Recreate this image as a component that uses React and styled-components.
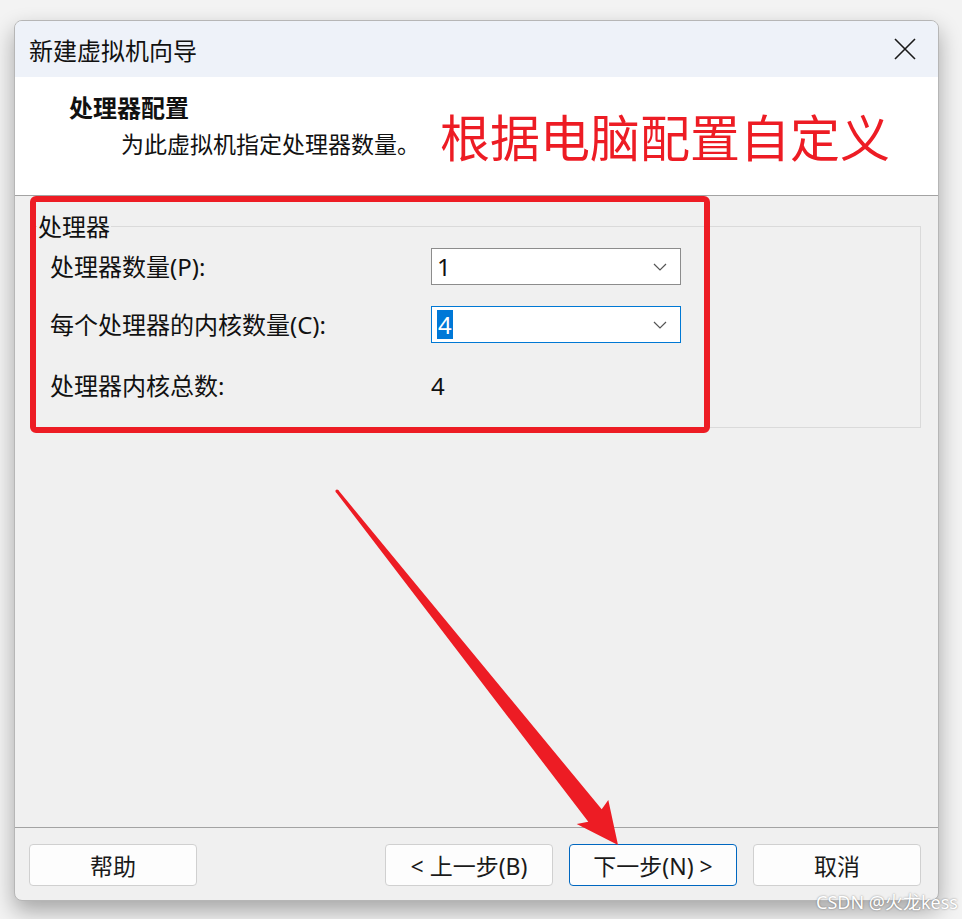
import React from 'react'
import styled, { createGlobalStyle } from 'styled-components'

const GlobalStyle = createGlobalStyle`
    html, body {
        margin: 0;
        background: #f3f3f3;
    }
    body {
        font-family: "Noto Sans", "Noto Sans CJK SC", sans-serif;
        color: #111;
    }
`;

const Page = styled.div`
    position: relative;
    width: 962px;
    height: 919px;
    box-sizing: border-box;
    padding: 20px 0 0 14px;
    overflow: hidden;
`;

const Window = styled.div`
    width: 925px;
    height: 881px;
    box-sizing: border-box;
    border: 1px solid #b6b6b6;
    border-radius: 8px;
    overflow: hidden;
    display: flex;
    flex-direction: column;
    background: #f0f0f0;
    box-shadow: 0 10px 22px rgba(0, 0, 0, 0.32);
`;

const TitleBar = styled.div`
    height: 56px;
    flex-shrink: 0;
    background: #eef2f9;
    display: flex;
    align-items: center;
    justify-content: space-between;
    padding: 0 22px 0 14px;
    font-family: "Noto Sans CJK SC", sans-serif;
    font-size: 24px;
`;

const CloseIcon = styled.svg`
    width: 22px;
    height: 22px;
    display: block;
`;

const Header = styled.div`
    position: relative;
    height: 118px;
    flex-shrink: 0;
    box-sizing: content-box;
    background: #fff;
    border-bottom: 1px solid #a3a3a3;
    padding: 0 0 0 54px;
    font-family: "Noto Sans CJK SC", sans-serif;
`;

const HeaderTitle = styled.div`
    padding-top: 15px;
    font-size: 24px;
    font-weight: 700;
    line-height: 30px;
`;

const HeaderText = styled.div`
    margin: 6px 0 0 52px;
    font-size: 23px;
    line-height: 30px;
`;

// red note written over the screenshot
const Note = styled.div`
    position: absolute;
    left: 425px;
    top: 28px;
    font-size: 50px;
    line-height: 60px;
    color: #ed1c24;
    white-space: nowrap;
`;

const Body = styled.div`
    flex: 1;
    padding: 16px 17px 0 15px;
`;

const GroupBox = styled.fieldset`
    margin: 0;
    padding: 0 0 19px 6px;
    border: 1px solid #dadada;
`;

const GroupLabel = styled.legend`
    padding: 0 1px;
    font-family: "Noto Sans CJK SC", sans-serif;
    font-size: 24px;
    line-height: 28px;
`;

const Form = styled.div`
    margin-top: 8px;
    padding-left: 13px;
    display: grid;
    grid-template-columns: 381px 250px;
    grid-template-rows: 37px 37px 44px;
    row-gap: 21px;
    align-items: center;
    font-size: 24px;
`;

const Label = styled.div`
    font-family: "Noto Sans", "Noto Sans CJK SC", sans-serif;
    line-height: 30px;
`;

const Combo = styled.div`
    height: 37px;
    box-sizing: border-box;
    border: 1px solid ${p => (p.$focused ? '#0078d4' : '#8c8c8c')};
    background: #fff;
    display: flex;
    align-items: center;
    justify-content: space-between;
    padding: 0 13px 0 5px;
    font-size: 24px;
`;

const Selected = styled.span`
    background: #0078d7;
    color: #fff;
    line-height: 29px;
    padding: 0 1px;
`;

const Value = styled.div`
    font-size: 24px;
    line-height: 30px;
`;

const Footer = styled.div`
    height: 73px;
    flex-shrink: 0;
    box-sizing: border-box;
    border-top: 1px solid #a3a3a3;
    padding: 16px 17px 0 14px;
    display: flex;
    justify-content: space-between;
    align-items: flex-start;
`;

const ButtonGroup = styled.div`
    display: flex;
    gap: 16px;
`;

const Button = styled.button`
    width: 168px;
    height: 42px;
    box-sizing: border-box;
    border: 1px solid ${p => (p.$primary ? '#0067c0' : '#d0d0d0')};
    border-radius: 4px;
    background: #fdfdfd;
    color: #1a1a1a;
    font-family: "Noto Sans", "Noto Sans CJK SC", sans-serif;
    font-size: 23px;
    padding: 0;
`;

const Overlay = styled.svg`
    position: absolute;
    left: 0;
    top: 0;
    pointer-events: none;
`;

const Watermark = styled.div`
    position: absolute;
    right: 4px;
    bottom: 5px;
    font-family: "Noto Sans", "Noto Sans CJK SC", sans-serif;
    font-size: 18px;
    color: #fff;
    text-shadow: 0 0 2px rgba(0, 0, 0, 0.45);
`;

const Chevron = () => (
    <svg width="14" height="8" viewBox="0 0 14 8">
        <polyline points="1,1 7,7 13,1" fill="none" stroke="#555" strokeWidth="1.2" />
    </svg>
);

const App = () => {
    return (
        <Page>
            <GlobalStyle />
            <Window>
                <TitleBar>
                    新建虚拟机向导
                    <CloseIcon viewBox="0 0 22 22">
                        <path d="M1 1 L21 21 M21 1 L1 21" stroke="#1a1a1a" strokeWidth="1.6" />
                    </CloseIcon>
                </TitleBar>
                <Header>
                    <HeaderTitle>处理器配置</HeaderTitle>
                    <HeaderText>为此虚拟机指定处理器数量。</HeaderText>
                    <Note>根据电脑配置自定义</Note>
                </Header>
                <Body>
                    <GroupBox>
                        <GroupLabel>处理器</GroupLabel>
                        <Form>
                            <Label>处理器数量(P):</Label>
                            <Combo>
                                1
                                <Chevron />
                            </Combo>
                            <Label>每个处理器的内核数量(C):</Label>
                            <Combo $focused>
                                <Selected>4</Selected>
                                <Chevron />
                            </Combo>
                            <Label>处理器内核总数:</Label>
                            <Value>4</Value>
                        </Form>
                    </GroupBox>
                </Body>
                <Footer>
                    <Button>帮助</Button>
                    <ButtonGroup>
                        <Button>&lt; 上一步(B)</Button>
                        <Button $primary>下一步(N) &gt;</Button>
                        <Button>取消</Button>
                    </ButtonGroup>
                </Footer>
            </Window>

            {/* red markup drawn on top of the dialog */}
            <Overlay width="962" height="919" viewBox="0 0 962 919">
                <rect x="33" y="199" width="674" height="231" rx="3" fill="none" stroke="#ed1c24" strokeWidth="6" />
                <polygon
                    fill="#ed1c24"
                    points="335.8,491.9 588.3,821.7 576.7,824 618,845 608.3,800 601.7,809.3 338.2,490.1"
                />
                <circle cx="337" cy="491" r="1.6" fill="#ed1c24" />
            </Overlay>
            <Watermark>CSDN @火龙kess</Watermark>
        </Page>
    )
}

export default App
